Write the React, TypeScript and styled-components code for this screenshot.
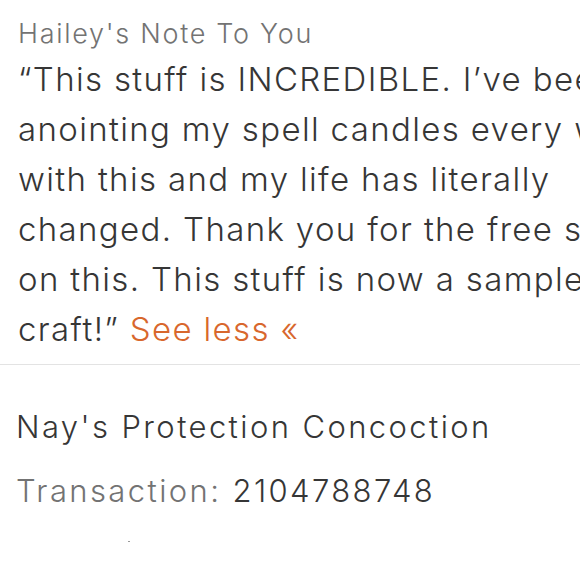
import styled, { createGlobalStyle } from "styled-components";

const GlobalStyle = createGlobalStyle`
  html, body {
    margin: 0;
    padding: 0;
    background: #ffffff;
  }
  body {
    font-family: Inter, "Noto Sans", sans-serif;
    color: #333333;
    overflow: hidden;
  }
`;

const Page = styled.div`
  width: 580px;
  height: 580px;
  overflow: hidden;
  background: #ffffff;
`;

const NoteSection = styled.section`
  padding: 16px 0 0 18px;
  width: 800px;
`;

const NoteTitle = styled.h3`
  margin: 0 0 2px;
  font-size: 27px;
  font-weight: 350;
  line-height: 36px;
  letter-spacing: 1.7px;
  color: #737373;
`;

const Quote = styled.p`
  margin: 0;
  font-size: 33px;
  font-weight: 350;
  line-height: 50px;
  letter-spacing: 1.35px;
  color: #363636;
  white-space: nowrap;
`;

const SeeLess = styled.a`
  color: #d8672d;
  text-decoration: none;
`;

const Divider = styled.hr`
  margin: 10px 0 0;
  border: none;
  border-top: 1px solid #e3e3e3;
`;

const OrderSection = styled.section`
  padding: 42px 0 0 16px;
  display: flex;
  flex-direction: column;
  gap: 24px;
`;

const Line = styled.div`
  font-size: 31px;
  font-weight: 350;
  line-height: 40px;
  letter-spacing: 2.4px;
  color: #363636;
`;

const Label = styled.span`
  color: #737373;
`;

const Speck = styled.span`
  display: block;
  margin: 30px 0 0 128px;
  width: 2px;
  height: 1px;
  background: #9a9a9a;
`;

export default function App() {
  return (
    <Page>
      <GlobalStyle />
      <NoteSection>
        <NoteTitle>Hailey's Note To You</NoteTitle>
        <Quote>
          “This stuff is INCREDIBLE. I’ve been
          <br />
          anointing my spell candles every week
          <br />
          with this and my life has literally
          <br />
          changed. Thank you for the free sample
          <br />
          on this. This stuff is now a sample in my
          <br />
          craft!” <SeeLess href="#">See less «</SeeLess>
        </Quote>
      </NoteSection>
      <Divider />
      <OrderSection>
        <Line>Nay's Protection Concoction</Line>
        <Line>
          <Label>Transaction:</Label> 2104788748
        </Line>
      </OrderSection>
      <Speck />
    </Page>
  );
}
